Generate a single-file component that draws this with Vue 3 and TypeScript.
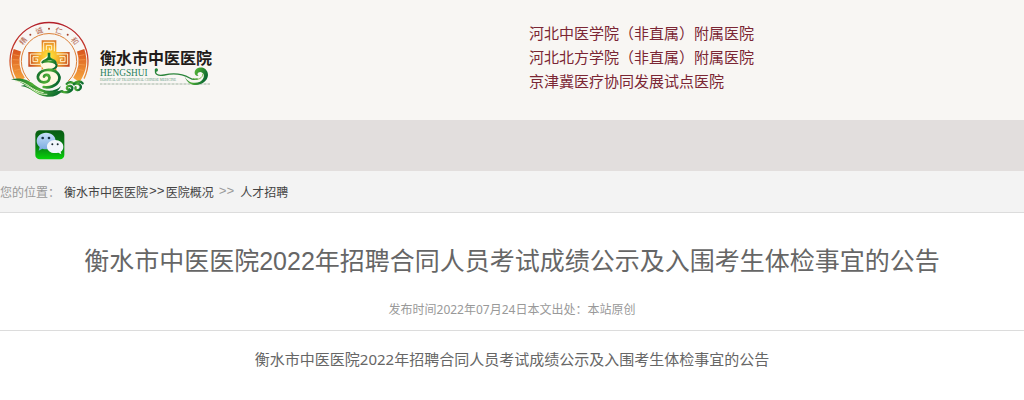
<script setup lang="ts">
const affiliations: string[] = [
  '河北中医学院（非直属）附属医院',
  '河北北方学院（非直属）附属医院',
  '京津冀医疗协同发展试点医院',
]
const title = '衡水市中医医院2022年招聘合同人员考试成绩公示及入围考生体检事宜的公告'
</script>

<template>
  <div class="page">
    <header class="header">
      <a class="brand" href="#" aria-label="衡水市中医医院">
        <svg class="logo" viewBox="0 0 660 300" role="img" aria-hidden="true">
          <defs>
            <linearGradient id="ring" x1="0" y1="0" x2="0" y2="1">
              <stop offset="0" stop-color="#b3202a" />
              <stop offset="0.6" stop-color="#c9402a" />
              <stop offset="1" stop-color="#ee9a3a" />
            </linearGradient>
            <linearGradient id="band" x1="0" y1="0" x2="0" y2="1">
              <stop offset="0" stop-color="#d9571f" />
              <stop offset="1" stop-color="#f5a33c" />
            </linearGradient>
            <radialGradient id="cross" gradientUnits="userSpaceOnUse" cx="147" cy="138" r="66">
              <stop offset="0" stop-color="#ffe93a" />
              <stop offset="0.45" stop-color="#f6b02c" />
              <stop offset="1" stop-color="#c5441f" />
            </radialGradient>
            <linearGradient id="leaf" x1="0" y1="0" x2="1" y2="0.3">
              <stop offset="0" stop-color="#0f6a2e" />
              <stop offset="0.5" stop-color="#4fae35" />
              <stop offset="1" stop-color="#0d6b30" />
            </linearGradient>
          </defs>
          <g fill="none" stroke="url(#ring)">
            <path d="M42 206A117 117 0 1 1 252 206" stroke-width="4" />
            <path d="M89 213A83 83 0 1 1 205 213" stroke="#dc8038" stroke-width="3" />
          </g>
          <g fill="none" stroke="url(#band)" stroke-width="23">
            <path d="M52 121A100 100 0 0 0 65 210" />
            <path d="M242 121A100 100 0 0 1 229 210" />
          </g>
          <g fill="none" stroke="#f6a052" stroke-width="2">
            <path d="M41 134l19 4M38 149l20 1M39 165l19 -2M43 182l19 -5" />
            <path d="M253 134l-19 4M256 149l-20 1M255 165l-19 -2M251 182l-19 -5" />
          </g>
          <g class="motto" text-anchor="middle">
            <text transform="translate(76 98) rotate(-52)">精</text>
            <text transform="translate(120 70) rotate(-18)">诚</text>
            <text transform="translate(174 70) rotate(18)">仁</text>
            <text transform="translate(218 98) rotate(52)">和</text>
          </g>
          <g fill="#a5442d">
            <circle cx="91" cy="74" r="3" />
            <circle cx="147" cy="56" r="3" />
            <circle cx="203" cy="74" r="3" />
          </g>
          <path d="M125 91h44v35h40v44h-40v18h-44v-18h-40v-44h40z" fill="url(#cross)" />
          <g fill="none" stroke="#fff3d0" stroke-width="3">
            <path d="M131 124v-27h32v27M139 120v-14h16v14h-7v-7" />
            <path d="M124 132h-33v31h29M116 140h-17v15h14v-8h-7" />
            <path d="M170 132h33v31h-29M178 140h17v15h-14v-8h7" />
          </g>
          <path d="M143 130h8v10c2 8 20 12 20 25c0 8-6 13-11 17c15 4 23 17 19 30c-5 18-30 25-48 15c-18-9-27-26-18-38c5-6 13-8 17-14c-11-7-13-20-3-27c8-5 14-7 16-13z" fill="#fff8df" />
          <g fill="none" stroke="url(#leaf)" stroke-linecap="round" stroke-linejoin="round">
            <path d="M127 157c6-9 15-5 20-14c6 8 16 5 20 14M127 157c7-4 31-4 39 3c12 11-8 22-25 20" stroke-width="6" />
            <path d="M141 180c-22 2-32 17-25 29c8 13 35 9 32-7c-1-9-14-10-16-2M141 180c29-2 43 16 35 33c-8 16-28 21-45 18" stroke-width="8" />
          </g>
          <path d="M143 128h8v14l8 9h-24l8-9z" fill="#12762d" />
          <g fill="url(#leaf)">
            <path d="M33 208c30-7 53 2 70 16c26 21 57 26 80 4c-12 30-54 33-83 14c-21-13-37-29-67-34z" />
            <path d="M62 228c34 3 42 29 79 32c18 2 35-4 50-20c-11 1-22 5-39 5c-34-1-54-28-90-17z" />
          </g>
          <path d="M46 213c36 0 47 30 85 35M76 226c27 10 32 29 66 27" fill="none" stroke="#e5f2cd" stroke-width="3" />
          <g fill="none" stroke="url(#leaf)" stroke-width="7" stroke-linecap="round">
            <path d="M184 244c15 6 30 2 33-8c2-9-13-11-16-4c-2 5 3 8 7 6" />
            <path d="M200 222c8-9 18-5 22 0c6-10 21-9 26-2" />
            <path d="M222 222c15-5 24 5 19 14c-6 8-18 4-14-4" />
          </g>
          <text class="name" x="300" y="163">衡水市中医医院</text>
          <text class="latin" x="300" y="198">HENGSHUI</text>
          <text class="small" x="300" y="213">HOSPITAL OF TRADITIONAL CHINESE MEDICINE</text>
          <path d="M300 222H632" stroke="#a3b5a3" stroke-width="4" stroke-dasharray="2 2" />
          <path d="M468 178c-6 15 6 21 25 17c31-7 53-4 76 9c8 5 17 5 24 3" fill="none" stroke="#2a843a" stroke-width="4" />
          <circle cx="469" cy="180" r="5" fill="#238838" />
          <path d="M554 197c6 20 29 26 46 18c16-8 15-28 1-29c-9 0-11 9-5 12c-15 2-17-20 0-25c23-6 39 22 19 41c-22 20-55 12-61-17z" fill="url(#leaf)" />
          <path d="M579 205c14 8 31-2 29-14" fill="none" stroke="#7fc351" stroke-width="3" />
        </svg>
      </a>
      <ul class="affiliations">
        <li v-for="item in affiliations" :key="item">{{ item }}</li>
      </ul>
    </header>

    <nav class="toolbar" aria-label="微信">
      <a class="wechat" href="#" aria-label="微信">
        <svg viewBox="0 0 90 90" aria-hidden="true">
          <defs>
            <linearGradient id="tile" x1="0" y1="0" x2="0" y2="1">
              <stop offset="0" stop-color="#075c12" />
              <stop offset="0.55" stop-color="#087d12" />
              <stop offset="1" stop-color="#08d50a" />
            </linearGradient>
            <linearGradient id="blue" x1="0" y1="0" x2="0" y2="1">
              <stop offset="0" stop-color="#c7e0fa" />
              <stop offset="1" stop-color="#79a9e0" />
            </linearGradient>
          </defs>
          <rect x="1" y="1" width="87" height="87" rx="13" fill="url(#tile)" />
          <path d="M33 8c18 0 29 11 29 25s-12 25-29 25c-4 0-8-1-11-2l-11 6l3-11C8 46 5 40 5 33C5 19 17 8 33 8z" fill="url(#blue)" />
          <circle cx="23" cy="24" r="4" fill="#173347" />
          <circle cx="42" cy="24" r="4" fill="#173347" />
          <path d="M60 30c15 0 25 9 25 20c0 7-3 12-8 15l2 8l-9-5c-20 5-34-5-34-18c0-11 10-20 24-20z" fill="#f2f6fc" />
          <circle cx="52" cy="43" r="3" fill="#17282f" />
          <circle cx="68" cy="43" r="3" fill="#17282f" />
        </svg>
      </a>
    </nav>

    <nav class="breadcrumb" aria-label="您的位置">
      <span class="label">您的位置：</span>
      <a href="#">衡水市中医医院</a><a class="mark" href="#">&gt;&gt;</a><a href="#">医院概况</a>
      <span class="mark separator">&gt;&gt;</span>
      <a href="#">人才招聘</a>
    </nav>

    <main>
      <h1>{{ title }}</h1>
      <p class="meta">发布时间2022年07月24日本文出处：本站原创</p>
      <p class="content">{{ title }}</p>
    </main>
  </div>
</template>

<style>
body {
  margin: 0;
  background: #fff;
}
</style>

<style scoped>
.page {
  color: #666;
  font-family: "Noto Sans", "Noto Sans CJK SC", sans-serif;
  font-size: 12px;
}

a {
  color: #444;
  text-decoration: none;
}

.header {
  display: grid;
  grid-template-columns: 529fr 495fr;
  align-items: start;
  min-height: 120px;
  background: #f8f6f3;
}

.brand {
  display: block;
  padding-top: 10px;
}

.logo {
  display: block;
  width: 220px;
  height: 100px;
}

.motto {
  fill: #b06048;
  font-family: "Noto Sans CJK SC", sans-serif;
  font-size: 22px;
}

.name {
  fill: #211b19;
  font-family: "Noto Sans CJK SC", sans-serif;
  font-size: 48px;
  font-weight: 700;
}

.latin {
  fill: #28805b;
  font-family: "Liberation Serif", serif;
  font-size: 28px;
}

.small {
  fill: #5f967c;
  font-family: "Liberation Serif", serif;
  font-size: 10px;
}

.affiliations {
  margin: 0;
  padding: 21px 0 0;
  color: #7b2634;
  font-size: 15px;
  line-height: 24px;
  list-style: none;
}

.toolbar {
  padding: 10px 0 11px 35px;
  background: #e2dedd;
}

.wechat {
  display: block;
  width: 30px;
  height: 30px;
}

.wechat svg {
  display: block;
}

.breadcrumb {
  display: flex;
  align-items: center;
  min-height: 41px;
  border-bottom: 1px solid #dcdcdc;
  background: #f3f3f3;
}

.label {
  margin-right: 4px;
  color: #999;
}

.mark {
  padding: 0 1px;
  font-family: "Liberation Mono", monospace;
  font-size: 13px;
}

.separator {
  margin: 0 5px 0 4px;
  color: #999;
}

h1 {
  margin: 0;
  padding-top: 30px;
  font-family: "Liberation Sans", "Noto Sans CJK SC", sans-serif;
  font-size: 25px;
  font-weight: 400;
  line-height: 36px;
  text-align: center;
}

.meta {
  margin: 0;
  padding: 20px 0 10px;
  border-bottom: 1px solid #dcdcdc;
  color: #999;
  line-height: 21px;
  text-align: center;
}

.content {
  margin: 0;
  padding-top: 16px;
  font-size: 15px;
  line-height: 24px;
  text-align: center;
}
</style>
